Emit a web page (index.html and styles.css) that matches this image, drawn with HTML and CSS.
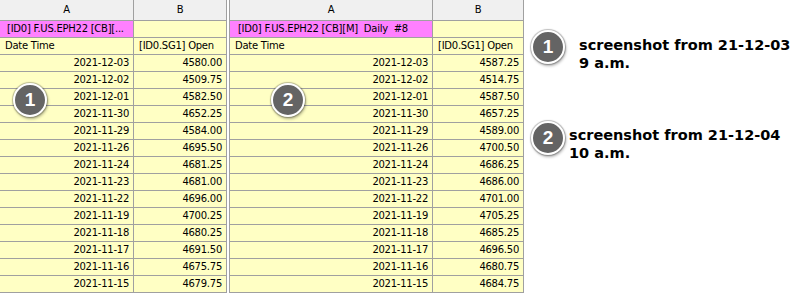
FILE: index.html
```html
<!DOCTYPE html>
<html>
<head>
<meta charset="utf-8">
<link rel="stylesheet" href="styles.css">
</head>
<body>
<div class="page">
  <div class="sheet sheet-a">
    <div class="row head"><div class="cell c">A</div><div class="cell c">B</div></div>
    <div class="row"><div class="cell pink clip">[ID0] F.US.EPH22 [CB][...</div><div class="cell"></div></div>
    <div class="row"><div class="cell">Date Time</div><div class="cell">[ID0.SG1] Open</div></div>
    <div class="row"><div class="cell r">2021-12-03</div><div class="cell r">4580.00</div></div>
    <div class="row"><div class="cell r">2021-12-02</div><div class="cell r">4509.75</div></div>
    <div class="row"><div class="cell r">2021-12-01</div><div class="cell r">4582.50</div></div>
    <div class="row"><div class="cell r">2021-11-30</div><div class="cell r">4652.25</div></div>
    <div class="row"><div class="cell r">2021-11-29</div><div class="cell r">4584.00</div></div>
    <div class="row"><div class="cell r">2021-11-26</div><div class="cell r">4695.50</div></div>
    <div class="row"><div class="cell r">2021-11-24</div><div class="cell r">4681.25</div></div>
    <div class="row"><div class="cell r">2021-11-23</div><div class="cell r">4681.00</div></div>
    <div class="row"><div class="cell r">2021-11-22</div><div class="cell r">4696.00</div></div>
    <div class="row"><div class="cell r">2021-11-19</div><div class="cell r">4700.25</div></div>
    <div class="row"><div class="cell r">2021-11-18</div><div class="cell r">4680.25</div></div>
    <div class="row"><div class="cell r">2021-11-17</div><div class="cell r">4691.50</div></div>
    <div class="row"><div class="cell r">2021-11-16</div><div class="cell r">4675.75</div></div>
    <div class="row"><div class="cell r">2021-11-15</div><div class="cell r">4679.75</div></div>
    <div class="badge badge-a">1</div>
  </div>
  <div class="sheet sheet-b">
    <div class="row head"><div class="cell c">A</div><div class="cell c">B</div></div>
    <div class="row"><div class="cell pink pre"> [ID0] F.US.EPH22 [CB][M]  Daily  #8</div><div class="cell"></div></div>
    <div class="row"><div class="cell">Date Time</div><div class="cell">[ID0.SG1] Open</div></div>
    <div class="row"><div class="cell r">2021-12-03</div><div class="cell r">4587.25</div></div>
    <div class="row"><div class="cell r">2021-12-02</div><div class="cell r">4514.75</div></div>
    <div class="row"><div class="cell r">2021-12-01</div><div class="cell r">4587.50</div></div>
    <div class="row"><div class="cell r">2021-11-30</div><div class="cell r">4657.25</div></div>
    <div class="row"><div class="cell r">2021-11-29</div><div class="cell r">4589.00</div></div>
    <div class="row"><div class="cell r">2021-11-26</div><div class="cell r">4700.50</div></div>
    <div class="row"><div class="cell r">2021-11-24</div><div class="cell r">4686.25</div></div>
    <div class="row"><div class="cell r">2021-11-23</div><div class="cell r">4686.00</div></div>
    <div class="row"><div class="cell r">2021-11-22</div><div class="cell r">4701.00</div></div>
    <div class="row"><div class="cell r">2021-11-19</div><div class="cell r">4705.25</div></div>
    <div class="row"><div class="cell r">2021-11-18</div><div class="cell r">4685.25</div></div>
    <div class="row"><div class="cell r">2021-11-17</div><div class="cell r">4696.50</div></div>
    <div class="row"><div class="cell r">2021-11-16</div><div class="cell r">4680.75</div></div>
    <div class="row"><div class="cell r">2021-11-15</div><div class="cell r">4684.75</div></div>
    <div class="badge badge-b">2</div>
  </div>
  <div class="notes">
    <div class="note note-1">
      <div class="dot">1</div>
      <div class="note-text">screenshot from 21-12-03<br>9 a.m.</div>
    </div>
    <div class="note note-2">
      <div class="dot">2</div>
      <div class="note-text">screenshot from 21-12-04<br>10 a.m.</div>
    </div>
  </div>
</div>
</body>
</html>
```

FILE: styles.css
```css
html, body {
  margin: 0;
  padding: 0;
  background: #ffffff;
}

.page {
  display: flex;
  align-items: flex-start;
  gap: 2px;
  width: 792px;
  height: 295px;
  overflow: hidden;
}

.sheet {
  position: relative;
  display: flex;
  flex-direction: column;
  font-family: "DejaVu Sans", sans-serif;
  font-size: 10px;
  letter-spacing: -0.25px;
  color: #000;
  flex: none;
}

.sheet-b {
  border-left: 1px solid #a0a0a0;
}

.row {
  display: grid;
  height: 17px;
}

.sheet-a .row { grid-template-columns: 134px 93px; }
.sheet-b .row { grid-template-columns: 203px 91px; }

.cell {
  box-sizing: border-box;
  border-right: 1px solid #a0a0a0;
  border-bottom: 1px solid #a0a0a0;
  background: #ffffc4;
  padding: 0 5px;
  line-height: 16px;
  white-space: nowrap;
  overflow: hidden;
}

.row.head { height: 21px; }
.head .cell {
  background: #f0f0f0;
  line-height: 20px;
}

.c { text-align: center; }
.r { text-align: right; padding-right: 4px; }
.pink { background: #ff80ff; padding-left: 7px; }
.pre { white-space: pre; padding-left: 5px; }

.badge, .dot {
  box-sizing: border-box;
  width: 34px;
  height: 34px;
  border-radius: 50%;
  background: #646464;
  border: 2px solid #ffffff;
  box-shadow: 0 0 1px 1px rgba(0,0,0,0.25), 1px 2px 3px rgba(0,0,0,0.3);
  color: #fff;
  font-family: "Liberation Sans", Arial, sans-serif;
  font-weight: bold;
  font-size: 19px;
  letter-spacing: 0;
  line-height: 30px;
  text-align: center;
  flex: none;
}

.badge { position: absolute; top: 83px; }
.badge-a { left: 13px; }
.badge-b { left: 41px; }

.notes {
  display: flex;
  flex-direction: column;
  padding-left: 5px;
  font-family: "DejaVu Sans", sans-serif;
  font-weight: bold;
  font-size: 14.5px;
  line-height: 18px;
  color: #000;
}

.note { display: flex; align-items: flex-start; }
.note-1 { margin-top: 30px; }
.note-1 .note-text { margin-left: 14px; margin-top: 6px; }
.note-2 { margin-top: 49px; }
.note-2 .note-text { margin-left: 4px; margin-top: 5px; }
```
